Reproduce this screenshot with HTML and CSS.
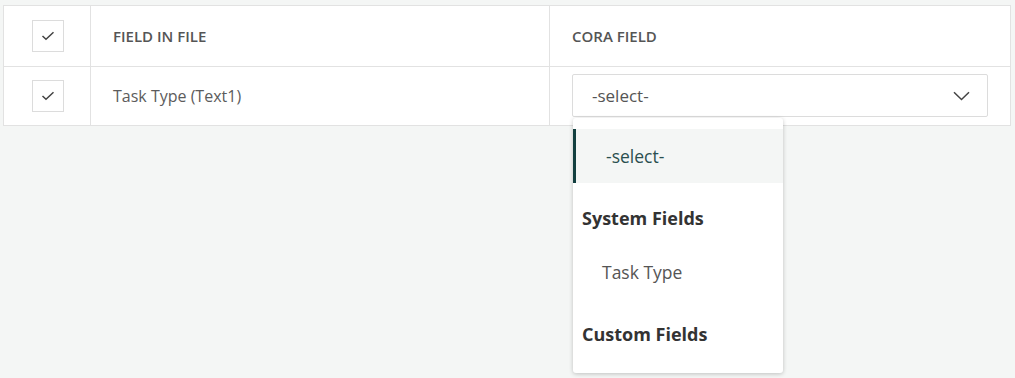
FILE: index.html
```html
<!DOCTYPE html>
<html lang="en">
<head>
    <meta charset="UTF-8">
    <meta name="viewport" content="width=device-width, initial-scale=1.0">
    <title>Field Mapping</title>
    <link rel="stylesheet" href="styles.css">
</head>
<body>
    <div class="map-table">
        <div class="map-row map-head">
            <div class="cell cell-check">
                <span class="check-box">
                    <svg width="14" height="10" viewBox="0 0 14 10"><path d="M1.5 5 L5 8.3 L12.5 1.3" fill="none" stroke="#444" stroke-width="1.5"/></svg>
                </span>
            </div>
            <div class="cell">FIELD IN FILE</div>
            <div class="cell">CORA FIELD</div>
        </div>
        <div class="map-row">
            <div class="cell cell-check">
                <span class="check-box">
                    <svg width="14" height="10" viewBox="0 0 14 10"><path d="M1.5 5 L5 8.3 L12.5 1.3" fill="none" stroke="#444" stroke-width="1.5"/></svg>
                </span>
            </div>
            <div class="cell cell-text">Task Type (Text1)</div>
            <div class="cell cell-select">
                <div class="select-box">
                    <span>-select-</span>
                    <svg width="17" height="10" viewBox="0 0 17 10"><path d="M1 1.2 L8.5 8.5 L16 1.2" fill="none" stroke="#444" stroke-width="1.5"/></svg>
                </div>
                <ul class="select-menu">
                    <li class="option selected">-select-</li>
                    <li class="group">System Fields</li>
                    <li class="option">Task Type</li>
                    <li class="group">Custom Fields</li>
                </ul>
            </div>
        </div>
    </div>
</body>
</html>
```

FILE: styles.css
```css
html {
    height: 100%;
}
body {
    margin: 0;
    padding: 5px 4px 0 3px;
    min-height: 100%;
    box-sizing: border-box;
    background: #f4f6f5;
    font-family: "Open Sans", Arial, sans-serif;
    color: #555;
}
.map-table {
    background: #fff;
    border: 1px solid #e2e2e2;
}
.map-row {
    display: grid;
    grid-template-columns: 86px 459px 1fr;
    height: 58px;
}
.map-head {
    height: 60px;
    border-bottom: 1px solid #e2e2e2;
    font-size: 15px;
    font-weight: 600;
    color: #555;
}
.cell {
    display: flex;
    align-items: center;
    padding-left: 22px;
    border-left: 1px solid #e2e2e2;
}
.cell-check {
    border-left: none;
    padding-left: 28px;
}
.check-box {
    width: 30px;
    height: 30px;
    border: 1px solid #dcdcdc;
    display: flex;
    align-items: center;
    justify-content: center;
}
.cell-text {
    font-size: 16px;
    color: #5c5c5c;
}
.cell-select {
    position: relative;
}
.select-box {
    width: 416px;
    height: 43px;
    margin-bottom: 1px;
    border: 1px solid #dcdcdc;
    border-radius: 2px;
    display: flex;
    align-items: center;
    justify-content: space-between;
    padding: 0 17px 0 19px;
    box-sizing: border-box;
    font-size: 17px;
    color: #555;
}
.select-menu {
    position: absolute;
    top: 51px;
    left: 23px;
    width: 210px;
    margin: 0;
    padding: 11px 0 12px;
    list-style: none;
    background: #fff;
    border-radius: 3px;
    box-shadow: 0 1px 4px rgba(0, 0, 0, 0.22);
    font-size: 17.5px;
    z-index: 2;
}
.option {
    height: 54px;
    line-height: 54px;
    padding-left: 29px;
    color: #555;
}
.option.selected {
    background: #f4f6f5;
    border-left: 3px solid #123f3f;
    padding-left: 30px;
    color: #2a4f4f;
}
.group {
    padding: 25px 9px 17px;
    line-height: 20px;
    font-size: 18px;
    font-weight: 700;
    color: #333;
}
```
